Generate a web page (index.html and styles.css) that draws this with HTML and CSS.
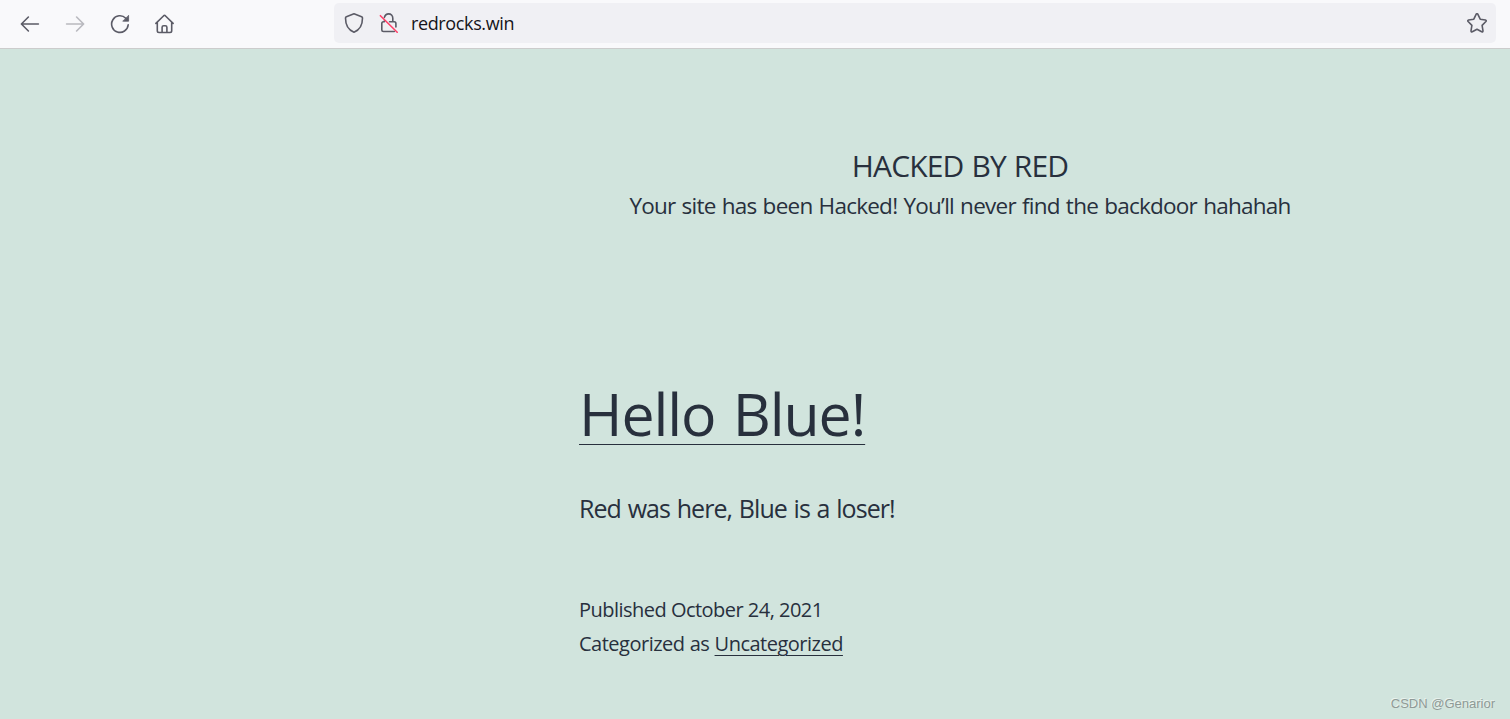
FILE: index.html
```html
<!DOCTYPE html>
<html lang="en">
  <head>
    <meta charset="UTF-8" />
    <meta name="viewport" content="width=device-width, initial-scale=1.0" />
    <title>HACKED BY RED</title>
    <link rel="stylesheet" href="styles.css">
  </head>
  <body>
    <div class="toolbar">
      <div class="nav">
        <svg class="icon" viewBox="0 0 20 20"><path d="M18.4 10H1.6M8.4 3 1.4 10 8.4 17"/></svg>
        <svg class="icon disabled" viewBox="0 0 20 20"><path d="M1.6 10h16.8M11.6 3 18.6 10 11.6 17"/></svg>
        <svg class="icon" viewBox="0 0 20 20"><path d="M18.2 10.8A8.3 8.3 0 1 1 15.8 4.2"/><path class="fill" d="M18.6 1.7v5.5h-5.5z"/></svg>
        <svg class="icon" viewBox="0 0 20 20"><path d="M.9 9.4 8.7 1.7q.8-.7 1.6 0l7.8 7.7M2.3 8.3v8.5q0 1.7 1.7 1.7h11q1.7 0 1.7-1.7V8.3M7.1 18.3v-5q0-1.6 1.6-1.6h1.6q1.6 0 1.6 1.6v5"/></svg>
      </div>
      <div class="urlbar">
        <svg class="icon shield" viewBox="0 0 20 20"><path d="M10 .8 17.6 3.7q.9.4.9 1.4C18.5 11 16 17 10 19.2 4 17 1.5 11 1.5 5.1q0-1 .9-1.4z"/></svg>
        <svg class="icon lock" viewBox="0 0 20 20"><path d="M5.4 4.4C6 2.3 7.6.9 9.6.9c2.4 0 4.2 1.9 4.2 4.3v3.6M10.6 8.8h4.6q1.7 0 1.7 1.7v3.4M5.4 7.8v1h-.9q-1.7 0-1.7 1.7v6.4q0 1.6 1.7 1.6h10.8"/><path class="slash" d="M1.4 2.7 18.2 19.3"/></svg>
        <span class="url">redrocks.win</span>
        <svg class="icon star" viewBox="0 0 20 20"><path d="M9.1 1.3q.9-1.2 1.8 0l2.3 4.9 5.2.8q1.3.4.5 1.5l-3.8 3.9.9 5.4q0 1.4-1.3 1L10 16.2l-4.7 2.6q-1.3.4-1.3-1l.9-5.4-3.8-3.9q-.8-1.1.5-1.5l5.2-.8z"/></svg>
      </div>
    </div>
    <header class="site-header">
      <h1 class="site-title">HACKED BY RED</h1>
      <p class="site-description">Your site has been Hacked! You’ll never find the backdoor hahahah</p>
    </header>
    <main class="post">
      <h2 class="entry-title"><a href="#">Hello Blue!</a></h2>
      <p class="entry-content">Red was here, Blue is a loser!</p>
      <footer class="entry-footer">
        <p class="published">Published October 24, 2021</p>
        <p class="category">Categorized as <a href="#">Uncategorized</a></p>
      </footer>
    </main>
    <div class="watermark">CSDN @Genarior</div>
  </body>
</html>
```
FILE: styles.css
```css
* {
  box-sizing: border-box;
}
body {
  margin: 0;
  height: 719px;
  overflow: hidden;
  background-color: #d1e4dd;
  color: #28303d;
  font-family: "Open Sans", "Noto Sans", sans-serif;
}
h1,
h2,
p {
  margin: 0;
  font-weight: 400;
  white-space: nowrap;
}
a {
  color: inherit;
}

.toolbar {
  display: flex;
  height: 49px;
  padding: 3px 14px 5px 20px;
  background-color: #f9f9fb;
  border-bottom: 1px solid #cccccc;
}
.nav {
  display: flex;
  align-items: center;
  gap: 25px;
  width: 314px;
  padding-top: 1px;
}
.icon {
  width: 20px;
  height: 20px;
  flex: none;
  fill: none;
  stroke: #5b5b66;
  stroke-width: 1.6;
  stroke-linecap: round;
  stroke-linejoin: round;
}
.icon .fill {
  fill: #5b5b66;
  stroke-width: 0.8;
}
.disabled {
  opacity: 0.4;
}
.urlbar {
  display: flex;
  flex: 1;
  align-items: center;
  height: 40px;
  padding: 0 9px 0 10px;
  background-color: #f0f0f4;
  border-radius: 5px;
}
.lock {
  margin: 0 12px 0 15px;
}
.icon .slash {
  stroke: #ff4068;
}
.url {
  flex: 1;
  color: #15141a;
  font-size: 18px;
  letter-spacing: -0.37px;
}

.site-header {
  width: 762px;
  height: 323px;
  margin-left: 579px;
  padding-top: 96px;
  text-align: center;
}
.site-title {
  font-size: 30px;
  line-height: 41px;
  letter-spacing: -0.85px;
  word-spacing: 1px;
}
.site-description {
  font-size: 22.5px;
  line-height: 40px;
  letter-spacing: -0.75px;
  word-spacing: 1px;
}
.post {
  margin-left: 579px;
}
.entry-title {
  height: 112px;
  font-size: 59px;
  line-height: 83px;
  letter-spacing: -1.09px;
  word-spacing: 3px;
}
.entry-title a {
  text-decoration-thickness: 1px;
  text-underline-offset: 8px;
}
.entry-content {
  height: 109px;
  font-size: 25px;
  line-height: 49px;
  letter-spacing: -0.93px;
  word-spacing: 1.1px;
}
.entry-footer {
  font-size: 20px;
  line-height: 34px;
  letter-spacing: -0.52px;
}
.category {
  letter-spacing: -0.5px;
  word-spacing: 0.5px;
}
.category a {
  text-decoration-thickness: 1px;
  text-underline-offset: 4px;
}
.watermark {
  position: absolute;
  right: 15px;
  bottom: 6px;
  color: #8f9a96;
  font: 13px/18px "Liberation Sans", sans-serif;
  text-shadow: -1px -1px 0 #eaf3ef;
}
```
